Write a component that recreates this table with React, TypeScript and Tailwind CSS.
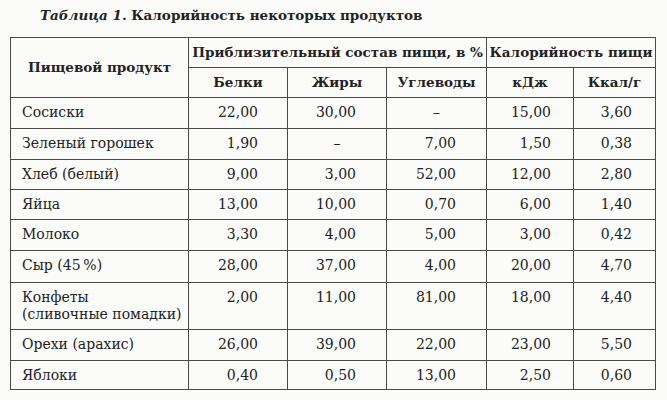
import React from "react";

type Row = { name: React.ReactNode; vals: string[]; h: string };

const rows: Row[] = [
  { name: "Сосиски", vals: ["22,00", "30,00", "–", "15,00", "3,60"], h: "h-[31px]" },
  { name: "Зеленый горошек", vals: ["1,90", "–", "7,00", "1,50", "0,38"], h: "h-[31px]" },
  { name: "Хлеб (белый)", vals: ["9,00", "3,00", "52,00", "12,00", "2,80"], h: "h-[30px]" },
  { name: "Яйца", vals: ["13,00", "10,00", "0,70", "6,00", "1,40"], h: "h-[30px]" },
  { name: "Молоко", vals: ["3,30", "4,00", "5,00", "3,00", "0,42"], h: "h-[31px]" },
  { name: "Сыр (45\u2009%)", vals: ["28,00", "37,00", "4,00", "20,00", "4,70"], h: "h-[32px]" },
  {
    name: (
      <>
        Конфеты
        <br />
        (сливочные помадки)
      </>
    ),
    vals: ["2,00", "11,00", "81,00", "18,00", "4,40"],
    h: "h-[47px]",
  },
  { name: "Орехи (арахис)", vals: ["26,00", "39,00", "22,00", "23,00", "5,50"], h: "h-[31px]" },
  { name: "Яблоки", vals: ["0,40", "0,50", "13,00", "2,50", "0,60"], h: "h-[29px]" },
];

const padR = ["pr-[29px]", "pr-[30px]", "pr-[30px]", "pr-[22px]", "pr-[23px]"];

export default function App() {
  return (
    <div
      className="w-[667px] h-[400px] bg-[#fbfbfa] text-[#222222] overflow-hidden"
      style={{ fontFamily: '"DejaVu Serif", "Liberation Serif", serif' }}
    >
      <div className="pl-[40px] pt-[6px] h-[37px] text-[13.5px] font-bold leading-[18px]">
        <span className="italic">Таблица 1.</span> Калорийность некоторых продуктов
      </div>
      <div className="pl-[10px]">
        <table className="border-collapse table-fixed w-[645px] text-[14px] leading-[17px]">
          <colgroup>
            <col className="w-[178px]" />
            <col className="w-[99px]" />
            <col className="w-[99px]" />
            <col className="w-[100px]" />
            <col className="w-[87px]" />
            <col className="w-[82px]" />
          </colgroup>
          <thead className="font-bold text-[13.5px]">
            <tr className="h-[30px]">
              <th rowSpan={2} className="border border-[#4a4a4a] font-bold text-center align-middle">
                Пищевой продукт
              </th>
              <th colSpan={3} className="border border-[#4a4a4a] font-bold text-center whitespace-nowrap">
                Приблизительный состав пищи, в %
              </th>
              <th colSpan={2} className="border border-[#4a4a4a] font-bold text-center whitespace-nowrap">
                Калорийность пищи
              </th>
            </tr>
            <tr className="h-[30px]">
              {["Белки", "Жиры", "Углеводы", "кДж", "Ккал/г"].map((t) => (
                <th key={t} className="border border-[#4a4a4a] font-bold text-center">
                  {t}
                </th>
              ))}
            </tr>
          </thead>
          <tbody>
            {rows.map((r, i) => (
              <tr key={i} className={r.h}>
                <td className="border border-[#4a4a4a] align-top pl-[11px] pt-[6px] whitespace-nowrap">
                  {r.name}
                </td>
                {r.vals.map((v, j) => (
                  <td
                    key={j}
                    className={
                      "border border-[#4a4a4a] align-top pt-[6px] " +
                      (v === "–" ? "text-center" : "text-right " + padR[j])
                    }
                  >
                    {v}
                  </td>
                ))}
              </tr>
            ))}
          </tbody>
        </table>
      </div>
    </div>
  );
}
